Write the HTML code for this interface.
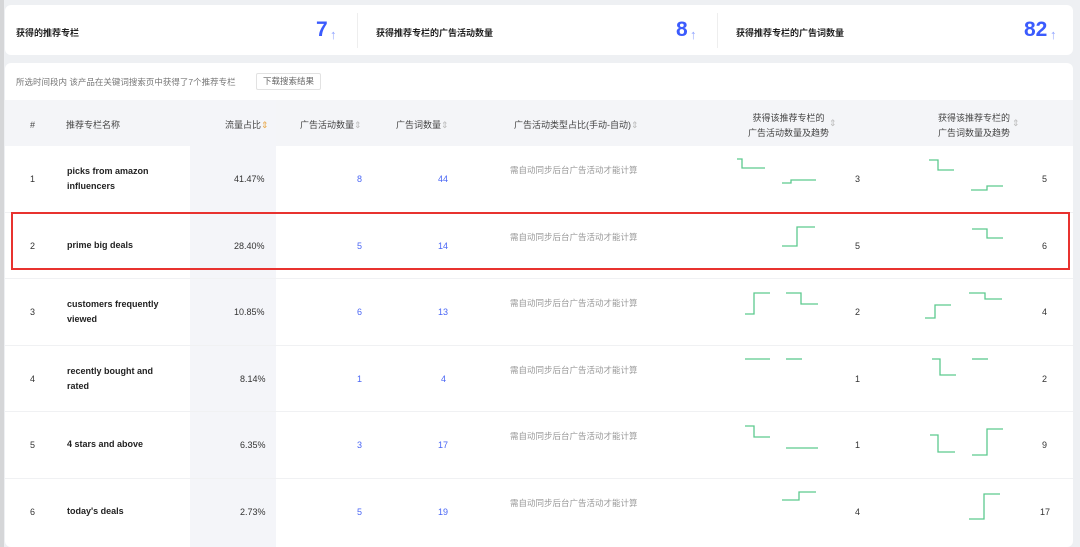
<!DOCTYPE html>
<html><head><meta charset="utf-8"><style>
*{margin:0;padding:0;box-sizing:border-box}
body{width:1080px;height:547px;background:#eef0f3;position:relative;overflow:hidden;font-family:"Liberation Sans","Noto Sans CJK SC",sans-serif;color:#333}
.a{position:absolute;white-space:nowrap}
.card{position:absolute;background:#fff;border-radius:6px}
.lbl{font-size:9px;font-weight:bold;color:#222}
.big{font-size:21px;font-weight:bold;color:#3b5bfd}
.arr{font-size:13px;color:#8fa3ff}
.h{font-size:9px;color:#444}
.c{font-size:9px;color:#333}
.b{font-size:9px;font-weight:bold;color:#222;line-height:15px}
.bl{font-size:9px;color:#4a66f5}
.g{font-size:8.5px;color:#999}
.line{position:absolute;left:5px;width:1068px;height:1px;background:#f0f1f3}
</style></head><body>
<div class="a" style="left:0;top:0;width:4px;height:547px;background:#d5d6d8"></div>
<div class="card" style="left:5px;top:5px;width:1068px;height:50px"></div>
<div class="a lbl" style="left:16px;top:26px">获得的推荐专栏</div>
<div class="a big" style="left:316px;top:18px">7</div><div class="a arr" style="left:330px;top:27px">↑</div>
<div class="a" style="left:357px;top:13px;width:1px;height:35px;background:#eee"></div>
<div class="a lbl" style="left:376px;top:26px">获得推荐专栏的广告活动数量</div>
<div class="a big" style="left:676px;top:18px">8</div><div class="a arr" style="left:690px;top:27px">↑</div>
<div class="a" style="left:717px;top:13px;width:1px;height:35px;background:#eee"></div>
<div class="a lbl" style="left:736px;top:26px">获得推荐专栏的广告词数量</div>
<div class="a big" style="left:1024px;top:18px">82</div><div class="a arr" style="left:1050px;top:27px">↑</div>

<div class="card" style="left:5px;top:63px;width:1068px;height:484px"></div>
<div class="a" style="left:16px;top:76px;font-size:8.5px;color:#777">所选时间段内 该产品在关键词搜索页中获得了7个推荐专栏</div>
<div class="a" style="left:256px;top:73px;width:65px;height:17px;border:1px solid #e2e2e2;border-radius:2px;font-size:8.5px;color:#666;text-align:center;line-height:15px">下载搜索结果</div>
<div class="a" style="left:5px;top:100px;width:1068px;height:46px;background:#f4f5f8"></div>
<div class="a" style="left:190px;top:100px;width:86px;height:447px;background:#f4f5f9"></div>
<div class="a h" style="left:30px;top:120px">#</div>
<div class="a h" style="left:66px;top:118px">推荐专栏名称</div>
<div class="a h" style="left:225px;top:118px">流量占比<span style="color:#e9a94c">⇕</span></div>
<div class="a h" style="left:300px;top:118px">广告活动数量<span style="color:#bbb">⇕</span></div>
<div class="a h" style="left:396px;top:118px">广告词数量<span style="color:#bbb">⇕</span></div>
<div class="a h" style="left:514px;top:118px">广告活动类型占比(手动-自动)<span style="color:#bbb">⇕</span></div>
<div class="a h" style="left:748px;top:111px;text-align:center;line-height:15px">获得该推荐专栏的<br>广告活动数量及趋势</div><div class="a h" style="left:829px;top:118px;color:#bbb">⇕</div>
<div class="a h" style="left:938px;top:111px;text-align:center;line-height:15px">获得该推荐专栏的<br>广告词数量及趋势</div><div class="a h" style="left:1012px;top:118px;color:#bbb">⇕</div>

<div class="line" style="top:212px"></div><div class="line" style="top:278px"></div><div class="line" style="top:345px"></div><div class="line" style="top:411px"></div><div class="line" style="top:478px"></div>

<div class="a c" style="left:30px;top:174px">1</div>
<div class="a b" style="left:67px;top:164px">picks from amazon<br>influencers</div>
<div class="a c" style="left:234px;top:174px">41.47%</div>
<div class="a bl" style="left:357px;top:174px">8</div><div class="a bl" style="left:438px;top:174px">44</div>
<div class="a g" style="left:510px;top:164px">需自动同步后台广告活动才能计算</div>
<div class="a c" style="left:855px;top:174px">3</div><div class="a c" style="left:1042px;top:174px">5</div>

<div class="a c" style="left:30px;top:241px">2</div>
<div class="a b" style="left:67px;top:238px">prime big deals</div>
<div class="a c" style="left:234px;top:241px">28.40%</div>
<div class="a bl" style="left:357px;top:241px">5</div><div class="a bl" style="left:438px;top:241px">14</div>
<div class="a g" style="left:510px;top:231px">需自动同步后台广告活动才能计算</div>
<div class="a c" style="left:855px;top:241px">5</div><div class="a c" style="left:1042px;top:241px">6</div>

<div class="a c" style="left:30px;top:307px">3</div>
<div class="a b" style="left:67px;top:297px">customers frequently<br>viewed</div>
<div class="a c" style="left:234px;top:307px">10.85%</div>
<div class="a bl" style="left:357px;top:307px">6</div><div class="a bl" style="left:438px;top:307px">13</div>
<div class="a g" style="left:510px;top:297px">需自动同步后台广告活动才能计算</div>
<div class="a c" style="left:855px;top:307px">2</div><div class="a c" style="left:1042px;top:307px">4</div>

<div class="a c" style="left:30px;top:374px">4</div>
<div class="a b" style="left:67px;top:364px">recently bought and<br>rated</div>
<div class="a c" style="left:240px;top:374px">8.14%</div>
<div class="a bl" style="left:357px;top:374px">1</div><div class="a bl" style="left:441px;top:374px">4</div>
<div class="a g" style="left:510px;top:364px">需自动同步后台广告活动才能计算</div>
<div class="a c" style="left:855px;top:374px">1</div><div class="a c" style="left:1042px;top:374px">2</div>

<div class="a c" style="left:30px;top:440px">5</div>
<div class="a b" style="left:67px;top:437px">4 stars and above</div>
<div class="a c" style="left:240px;top:440px">6.35%</div>
<div class="a bl" style="left:357px;top:440px">3</div><div class="a bl" style="left:438px;top:440px">17</div>
<div class="a g" style="left:510px;top:430px">需自动同步后台广告活动才能计算</div>
<div class="a c" style="left:855px;top:440px">1</div><div class="a c" style="left:1042px;top:440px">9</div>

<div class="a c" style="left:30px;top:507px">6</div>
<div class="a b" style="left:67px;top:504px">today's deals</div>
<div class="a c" style="left:240px;top:507px">2.73%</div>
<div class="a bl" style="left:357px;top:507px">5</div><div class="a bl" style="left:438px;top:507px">19</div>
<div class="a g" style="left:510px;top:497px">需自动同步后台广告活动才能计算</div>
<div class="a c" style="left:855px;top:507px">4</div><div class="a c" style="left:1040px;top:507px">17</div>

<svg class="a" style="left:0;top:0" width="1080" height="547" fill="none" stroke="#5cc98e" stroke-width="1.3">
<polyline points="737,159 742,159 742,168 765,168"/><polyline points="782,183 791,183 791,180 816,180"/>
<polyline points="929,160 938,160 938,170 954,170"/><polyline points="971,190 987,190 987,186 1003,186"/>
<polyline points="782,246 797,246 797,227 815,227"/>
<polyline points="972,229 987,229 987,238 1003,238"/>
<polyline points="745,314 754,314 754,293 770,293"/><polyline points="786,293 801,293 801,304 818,304"/>
<polyline points="925,318 935,318 935,305 951,305"/><polyline points="969,293 985,293 985,299 1002,299"/>
<polyline points="745,359 770,359"/><polyline points="786,359 802,359"/>
<polyline points="932,359 940,359 940,375 956,375"/><polyline points="972,359 988,359"/>
<polyline points="745,426 754,426 754,437 770,437"/><polyline points="786,448 818,448"/>
<polyline points="930,435 938,435 938,452 955,452"/><polyline points="972,455 987,455 987,429 1003,429"/>
<polyline points="782,500 799,500 799,492 816,492"/>
<polyline points="969,519 984,519 984,494 1000,494"/>
</svg>
<div class="a" style="left:11px;top:212px;width:1059px;height:58px;border:2px solid #e8322f"></div>
</body></html>
